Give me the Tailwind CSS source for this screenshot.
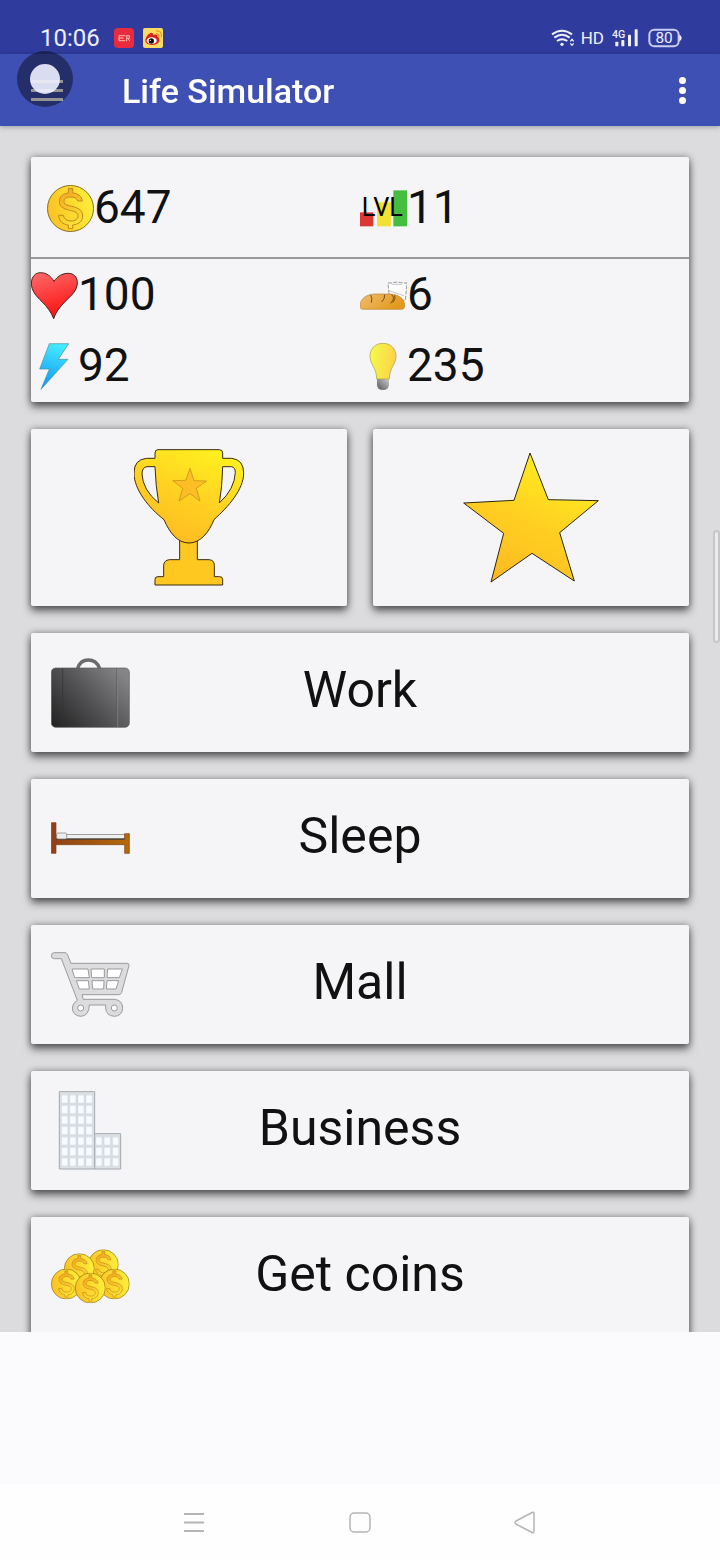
<!DOCTYPE html>
<html lang="en">
<head>
    <meta charset="UTF-8">
    <meta name="viewport" content="width=device-width, initial-scale=1.0">
    <title>Life Simulator</title>
    <script src="https://cdn.jsdelivr.net/npm/@tailwindcss/browser@4"></script>
</head>
<body class="relative flex h-screen flex-col bg-[#fbfafd] font-[Roboto,sans-serif] text-[#111111]">

    <!-- shared gradients and the coin -->
    <svg class="absolute size-0" aria-hidden="true">
        <defs>
            <linearGradient id="gold" x1="0.2" y1="1" x2="0.7" y2="0">
                <stop offset="0" stop-color="#ffb821"/>
                <stop offset="0.5" stop-color="#ffd022"/>
                <stop offset="1" stop-color="#fff01f"/>
            </linearGradient>
            <linearGradient id="coinFill" x1="0" y1="0.6" x2="1" y2="0.4">
                <stop offset="0" stop-color="#fdc022"/>
                <stop offset="1" stop-color="#fdf03a"/>
            </linearGradient>
            <linearGradient id="coinSign" x1="0" y1="0" x2="0.3" y2="1">
                <stop offset="0" stop-color="#f5a01d"/>
                <stop offset="1" stop-color="#fbe035"/>
            </linearGradient>
            <symbol id="coin" viewBox="0 0 141 141">
                <circle cx="70.500" cy="70.500" r="69" fill="url(#coinFill)" stroke="#8a6d1a" stroke-width="3"/>
                <path d="M64 10h13v14c17 2 27 10 29 24H92c-2-8-9-12-21-12-13 0-20 5-20 13 0 9 6 11 23 15 22 5 33 12 33 29 0 16-12 25-30 27v11H64v-11c-17-2-28-12-29-29h14c2 11 10 17 23 17s21-6 21-15c0-10-7-13-25-17-20-5-31-11-31-27 0-14 11-23 27-25z" fill="url(#coinSign)" stroke="#c08a1c" stroke-width="3"/>
            </symbol>
        </defs>
    </svg>

    <!-- status bar -->
    <header class="flex h-[54px] shrink-0 items-end justify-between bg-[#303c9d] pr-[38px] pb-0.5 pl-10 text-[#eef0ff]">
        <div class="flex items-center">
            <span class="text-2xl leading-7">10:06</span>
            <svg class="ml-3.5 size-5" viewBox="0 0 60 60" fill="none">
                <rect width="60" height="60" rx="12" fill="#e92b40"/>
                <path d="M34 23H15v15h19M15 30h14M38 22v18M38 23h8v8h-8M42 31l5 8" stroke="#ffb9a8" stroke-width="3"/>
            </svg>
            <svg class="ml-[9px] size-5" viewBox="0 0 60 60">
                <rect width="60" height="60" rx="6" fill="#fbdc62"/>
                <path d="M7 37c0-10 12-24 20-23 4 1 3 6 3 7 7-3 14-2 13 5 5 2 6 6 6 10 0 10-12 15-22 15S7 46 7 37z" fill="#d8231f"/>
                <ellipse cx="26" cy="38" rx="15" ry="10" fill="#fff"/>
                <circle cx="25" cy="39" r="8" fill="#111"/>
                <circle cx="22" cy="37" r="2" fill="#fff"/>
                <path d="M39 17c6-1 10 4 8 10M39 9c12-2 19 7 16 18" fill="none" stroke="#f19a21" stroke-width="4"/>
            </svg>
        </div>
        <div class="flex items-center">
            <svg class="h-5 w-6" viewBox="0 0 72 60" fill="none" stroke="#eef0ff" stroke-width="6">
                <path d="M3 19q30-22 60 0M10 29q23-17 46 0M18 39q15-11 31 0"/>
                <circle cx="33" cy="49" r="5" fill="#eef0ff" stroke="none"/>
                <path d="M58 40l5-6 5 6M58 46l5 6 5-6" stroke-width="4"/>
            </svg>
            <span class="ml-1.5 text-[17px] leading-7">HD</span>
            <svg class="ml-2 h-5 w-[26px]" viewBox="0 0 78 60" fill="#eef0ff">
                <text x="0" y="29" font-size="32" font-weight="500" font-family="Roboto, sans-serif">4G</text>
                <rect x="10" y="41" width="9" height="14" rx="2"/>
                <rect x="28" y="36" width="9" height="19" rx="2"/>
                <rect x="48" y="20" width="9" height="35" rx="2"/>
                <rect x="68" y="4" width="9" height="51" rx="2"/>
            </svg>
            <svg class="ml-2.5 h-5 w-[34px]" viewBox="0 0 102 60">
                <rect x="4" y="5" width="88" height="50" rx="15" fill="none" stroke="#c9cef2" stroke-width="6"/>
                <path d="M94 20q7 3 7 10t-7 10z" fill="#eef0ff"/>
                <text x="48" y="46" text-anchor="middle" font-size="46" font-family="Roboto, sans-serif" fill="#eef0ff">80</text>
            </svg>
        </div>
    </header>

    <!-- toolbar -->
    <div class="z-10 flex h-[72px] shrink-0 items-center bg-[#3f50b4] pr-4 pl-[31px] text-white shadow-[0_1px_5px_rgba(0,0,0,0.3)]">
        <button type="button" aria-label="Menu" class="flex w-8 flex-col gap-1.5">
            <span class="h-[3px] w-full bg-white"></span>
            <span class="h-[3px] w-full bg-white"></span>
            <span class="h-[3px] w-full bg-white"></span>
        </button>
        <h1 class="ml-[59px] flex-1 pt-0.5 text-[34px] leading-10 font-medium">Life Simulator</h1>
        <button type="button" aria-label="More options" class="flex w-11 flex-col items-center gap-[3px]">
            <span class="size-[7px] rounded-full bg-white"></span>
            <span class="size-[7px] rounded-full bg-white"></span>
            <span class="size-[7px] rounded-full bg-white"></span>
        </button>
    </div>

    <!-- floating assistive ball -->
    <div class="absolute top-[51px] left-[17px] z-20 flex size-14 items-center justify-center rounded-full bg-black/42">
        <span class="size-[30px] rounded-full bg-[#eef1ff]/90"></span>
    </div>

    <!-- scroll indicator -->
    <div class="absolute top-[530px] right-0 z-20 h-[113px] w-[7px] rounded-md border-2 border-[#c6c5c8] bg-[#ebeaed]"></div>

    <main class="flex min-h-0 flex-1 flex-col gap-[27px] overflow-y-auto bg-[#dcdbde] px-[31px] pt-[31px] [scrollbar-width:none]">

        <section class="shrink-0 rounded-xs bg-[#f5f5f7] text-[46px] leading-[54px] shadow-[0_5px_9px_rgba(0,0,0,0.55),0_0_7px_rgba(0,0,0,0.35)]">
            <div class="grid h-[102px] grid-cols-2 items-center border-b-2 border-[#999999] pt-0.5">
                <div class="flex items-center pl-4">
                    <svg class="size-[47px]"><use href="#coin"/></svg>
                    <span class="pb-0.5">647</span>
                </div>
                <div class="flex items-center">
                    <svg class="size-[47px]" viewBox="60 119 141 141">
                        <rect x="60" y="201" width="40" height="42" fill="#dc3833"/>
                        <rect x="111" y="171" width="42" height="72" fill="#f1e130"/>
                        <rect x="160" y="135" width="41" height="108" fill="#45bd3f"/>
                        <text x="65" y="211" font-size="76" font-family="Roboto, sans-serif">LVL</text>
                    </svg>
                    <span class="pb-0.5">11</span>
                </div>
            </div>
            <div class="grid auto-rows-[71px] grid-cols-2 items-center pt-px">
                <div class="flex items-center">
                    <svg class="size-[47px]" viewBox="33 381 141 141">
                        <linearGradient id="heart" x1="0.3" y1="0" x2="0.6" y2="1">
                            <stop offset="0" stop-color="#ff6464"/>
                            <stop offset="1" stop-color="#fb0d0d"/>
                        </linearGradient>
                        <path d="M102 409C92 392 78 383 62 383c-16 0-27 12-28 31 0 23 14 39 32 56 16 16 28 32 35 51 6-20 18-34 34-51 19-19 37-33 37-57 0-18-12-28-27-28-18 0-33 9-43 24z" fill="url(#heart)" stroke="#4a2020" stroke-width="3"/>
                    </svg>
                    <span class="pb-1">100</span>
                </div>
                <div class="flex items-center">
                    <svg class="size-[47px]" viewBox="60 381 141 141">
                        <linearGradient id="bread" x1="0" y1="0" x2="1" y2="0.4">
                            <stop offset="0" stop-color="#f0bd72"/>
                            <stop offset="1" stop-color="#e29a1c"/>
                        </linearGradient>
                        <path d="M144 414h12q15-5 32 0h13l-5 52h-47z" fill="#fdfdfd" stroke="#666" stroke-width="2" stroke-dasharray="12 4"/>
                        <path d="M155 418h32M145 436l48 17" fill="none" stroke="#aaa" stroke-width="2"/>
                        <path d="M60 484c0-22 18-36 45-37h45c26 1 44 14 44 35 0 8-4 11-10 11H70c-7 0-10-3-10-9z" fill="url(#bread)" stroke="#b98334" stroke-width="2"/>
                        <path d="M92 450q6 10 2 23M134 449q1 13-9 22M154 449q14 8-2 26M164 451q5 10-6 22" fill="none" stroke="#7a4a16" stroke-width="3"/>
                    </svg>
                    <span class="pb-1">6</span>
                </div>
                <div class="flex items-center">
                    <svg class="size-[47px]" viewBox="33 594 141 141">
                        <linearGradient id="bolt" x1="0.5" y1="0" x2="0.3" y2="1">
                            <stop offset="0" stop-color="#45eafc"/>
                            <stop offset="1" stop-color="#0f95f7"/>
                        </linearGradient>
                        <path d="M88 596h58l-31 47h29l-81 90 25-61H59z" fill="url(#bolt)" stroke="#4a8ea0" stroke-width="2"/>
                    </svg>
                    <span class="pb-1">92</span>
                </div>
                <div class="flex items-center">
                    <svg class="size-[47px]" viewBox="60 594 141 141">
                        <linearGradient id="bulb" x1="0" y1="0.4" x2="1" y2="0.6">
                            <stop offset="0" stop-color="#f5fa4a"/>
                            <stop offset="1" stop-color="#fdd048"/>
                        </linearGradient>
                        <linearGradient id="bulbBase" x1="0" y1="1" x2="1" y2="0">
                            <stop offset="0" stop-color="#555"/>
                            <stop offset="1" stop-color="#ccc"/>
                        </linearGradient>
                        <path d="M111 702h36v17q-1 16-18 16t-18-16z" fill="url(#bulbBase)"/>
                        <path d="M129 595c-24 0-39 17-39 39 0 25 20 34 20 68h38c0-34 20-44 20-68 0-22-15-39-39-39z" fill="url(#bulb)" stroke="#a3974a" stroke-width="2"/>
                    </svg>
                    <span class="pb-1">235</span>
                </div>
            </div>
        </section>

        <div class="grid h-[177px] shrink-0 grid-cols-2 gap-[26px]">
            <button type="button" aria-label="Achievements" class="flex items-center justify-center rounded-xs bg-[#f5f5f7] shadow-[0_5px_9px_rgba(0,0,0,0.55),0_0_7px_rgba(0,0,0,0.35)]">
                <svg class="h-[137px] w-[111px]" viewBox="341 86 333 411" stroke="#3a2c10" stroke-width="3">
                    <path d="M478 355h53v63h36q15 2 15 17v34h16q9 0 9 8v17H404v-17q0-8 9-8h17v-34q1-15 17-17h31z" fill="#ffc820"/>
                    <path d="M404 114H378q-37 4-37 44c0 50 45 105 90 140 17 40 41 70 75 70s60-32 75-70c42-38 89-90 89-140q0-40-36-44h-27V98q0-10-10-10H413q-9 0-9 10zM404 139h-24q-15 2-15 22 2 48 50 87-9-50-11-109zm203 0h26q12 2 12 17-2 50-48 92 9-50 10-109z" fill="url(#gold)" fill-rule="evenodd"/>
                    <path d="M509 144l12 37 38 1-31 22 11 38-30-22-33 22 11-38-30-23 39-1z" fill="#fdbd24" stroke="#b98a1c" stroke-width="2"/>
                </svg>
            </button>
            <button type="button" aria-label="Favourites" class="flex items-center justify-center rounded-xs bg-[#f5f5f7] shadow-[0_5px_9px_rgba(0,0,0,0.55),0_0_7px_rgba(0,0,0,0.35)]">
                <svg class="h-[131px] w-[136px]" viewBox="310 95 408 393">
                    <path d="M511 98l55 140 150 3-116 96 44 145-127-83-123 86 38-146-120-91 151-8z" fill="url(#gold)" stroke="#2b2412" stroke-width="3"/>
                </svg>
            </button>
        </div>

        <button type="button" class="grid h-[119px] shrink-0 grid-cols-[80px_1fr_80px] items-center rounded-xs bg-[#f5f5f7] px-5 text-[50px] leading-[58px] shadow-[0_5px_9px_rgba(0,0,0,0.55),0_0_7px_rgba(0,0,0,0.35)]">
            <svg class="size-20" viewBox="93 98 240 240">
                <linearGradient id="case" x1="0" y1="0.9" x2="1" y2="0.2">
                    <stop offset="0" stop-color="#252526"/>
                    <stop offset="0.5" stop-color="#525254"/>
                    <stop offset="1" stop-color="#858587"/>
                </linearGradient>
                <path d="M173 144q8-25 32-25t34 25" fill="none" stroke="#6a6a6c" stroke-width="10"/>
                <rect x="94" y="143" width="234" height="178" rx="13" fill="url(#case)" stroke="#59595b" stroke-width="2"/>
                <path d="M128 144v176" stroke="#333" stroke-width="2"/>
                <path d="M290 144v176" stroke="#555" stroke-width="2"/>
                <path d="M293 144v176" stroke="#8b8b8d" stroke-width="2"/>
            </svg>
            <span class="pb-1.5">Work</span>
        </button>

        <button type="button" class="grid h-[119px] shrink-0 grid-cols-[80px_1fr_80px] items-center rounded-xs bg-[#f5f5f7] px-5 text-[50px] leading-[58px] shadow-[0_5px_9px_rgba(0,0,0,0.55),0_0_7px_rgba(0,0,0,0.35)]">
            <svg class="size-20" viewBox="93 536 240 240">
                <linearGradient id="wood" gradientUnits="userSpaceOnUse" x1="93" y1="0" x2="328" y2="0">
                    <stop offset="0" stop-color="#8f3f17"/>
                    <stop offset="1" stop-color="#b56b07"/>
                </linearGradient>
                <rect x="110" y="643" width="205" height="13" fill="#efeff1" stroke="#777" stroke-width="2"/>
                <path d="M94 607h14v50h206v-17h14v59h-14v-26H108v26H94z" fill="url(#wood)" stroke="#7a4013" stroke-width="2"/>
                <path d="M108 656h206" stroke="#333" stroke-width="3"/>
                <rect x="110" y="638" width="30" height="18" rx="4" fill="#ececee" stroke="#777" stroke-width="2"/>
            </svg>
            <span class="pb-1.5">Sleep</span>
        </button>

        <button type="button" class="grid h-[119px] shrink-0 grid-cols-[80px_1fr_80px] items-center rounded-xs bg-[#f5f5f7] px-5 text-[50px] leading-[58px] shadow-[0_5px_9px_rgba(0,0,0,0.55),0_0_7px_rgba(0,0,0,0.35)]">
            <svg class="size-20" viewBox="93 74 240 240" stroke="#9b9b9d" stroke-width="3" stroke-linejoin="round">
                <path d="M103 97h32q5 0 7 5l11 27h168q7 0 6 7l-22 80q-2 7-9 7H186l4 14h94q24 3 24 27-2 23-25 24-25-2-26-25v-9h-49q-1 33-26 34-24-2-25-25 0-14 15-23L124 115h-21q-9 0-9-9t9-9z" fill="#dcdcde"/>
                <path d="M156 146h48l4 26h-44zM213 146h40v26h-38zM263 146h44l-9 26h-37zM169 181h36l3 25h-30zM216 181h36l-1 25h-33zM261 181h35l-8 25h-29z" fill="#fff"/>
                <circle cx="182" cy="263" r="9" fill="#fff"/>
                <circle cx="283" cy="263" r="9" fill="#fff"/>
            </svg>
            <span class="pb-1.5">Mall</span>
        </button>

        <button type="button" class="grid h-[119px] shrink-0 grid-cols-[80px_1fr_80px] items-center rounded-xs bg-[#f5f5f7] px-5 text-[50px] leading-[58px] shadow-[0_5px_9px_rgba(0,0,0,0.55),0_0_7px_rgba(0,0,0,0.35)]">
            <svg class="size-20" viewBox="93 512 240 240">
                <defs>
                    <pattern id="panes" patternUnits="userSpaceOnUse" x="122" y="520" width="24.500" height="31.500">
                        <rect x="2" y="3" width="20" height="26" fill="#f6fbff" stroke="#c6ced5" stroke-width="2"/>
                    </pattern>
                    <pattern id="panesLow" patternUnits="userSpaceOnUse" x="225" y="646" width="25" height="31.500">
                        <rect x="2" y="3" width="20" height="26" fill="#f6fbff" stroke="#c6ced5" stroke-width="2"/>
                    </pattern>
                </defs>
                <path d="M118 514h106v126h78v106H118zM224 640v106" fill="#dfe1e4" stroke="#a3a9af" stroke-width="3"/>
                <rect x="122" y="520" width="98" height="220" fill="url(#panes)"/>
                <rect x="225" y="646" width="75" height="94" fill="url(#panesLow)"/>
            </svg>
            <span class="pb-1.5">Business</span>
        </button>

        <button type="button" class="grid h-[119px] shrink-0 grid-cols-[80px_1fr_80px] items-center rounded-xs bg-[#f5f5f7] px-5 text-[50px] leading-[58px] shadow-[0_5px_9px_rgba(0,0,0,0.55),0_0_7px_rgba(0,0,0,0.35)]">
            <svg class="size-20" viewBox="93 110 240 240">
                <use href="#coin" x="204" y="147" width="92" height="92"/>
                <use href="#coin" x="132" y="159" width="92" height="92"/>
                <use href="#coin" x="93" y="205" width="92" height="92"/>
                <use href="#coin" x="237" y="205" width="92" height="92"/>
                <use href="#coin" x="165" y="217" width="92" height="92"/>
            </svg>
            <span class="pb-1.5">Get coins</span>
        </button>
    </main>

    <!-- empty banner slot -->
    <div class="z-10 h-[152px] shrink-0 bg-[#fbfafd]"></div>

    <!-- system navigation -->
    <nav class="flex h-[76px] shrink-0 items-center justify-center gap-[142px] bg-[#fefefe]">
        <button type="button" aria-label="Recents">
            <svg class="size-6" viewBox="0 0 24 24" fill="none" stroke="#b5b4b6" stroke-width="2"><path d="M2 4h20M2 12.500h20M2 21h20"/></svg>
        </button>
        <button type="button" aria-label="Home">
            <svg class="size-6" viewBox="0 0 24 24" fill="none" stroke="#b5b4b6" stroke-width="1.500"><rect x="2" y="3" width="20" height="19" rx="4"/></svg>
        </button>
        <button type="button" aria-label="Back">
            <svg class="size-6" viewBox="1 0 24 24" fill="none" stroke="#b5b4b6" stroke-width="1.500" stroke-linejoin="round"><path d="M19 2.500Q21 1.500 21 4v17q0 2.500-2 1.500L3 14q-2-1.500 0-3z"/></svg>
        </button>
    </nav>
</body>
</html>
